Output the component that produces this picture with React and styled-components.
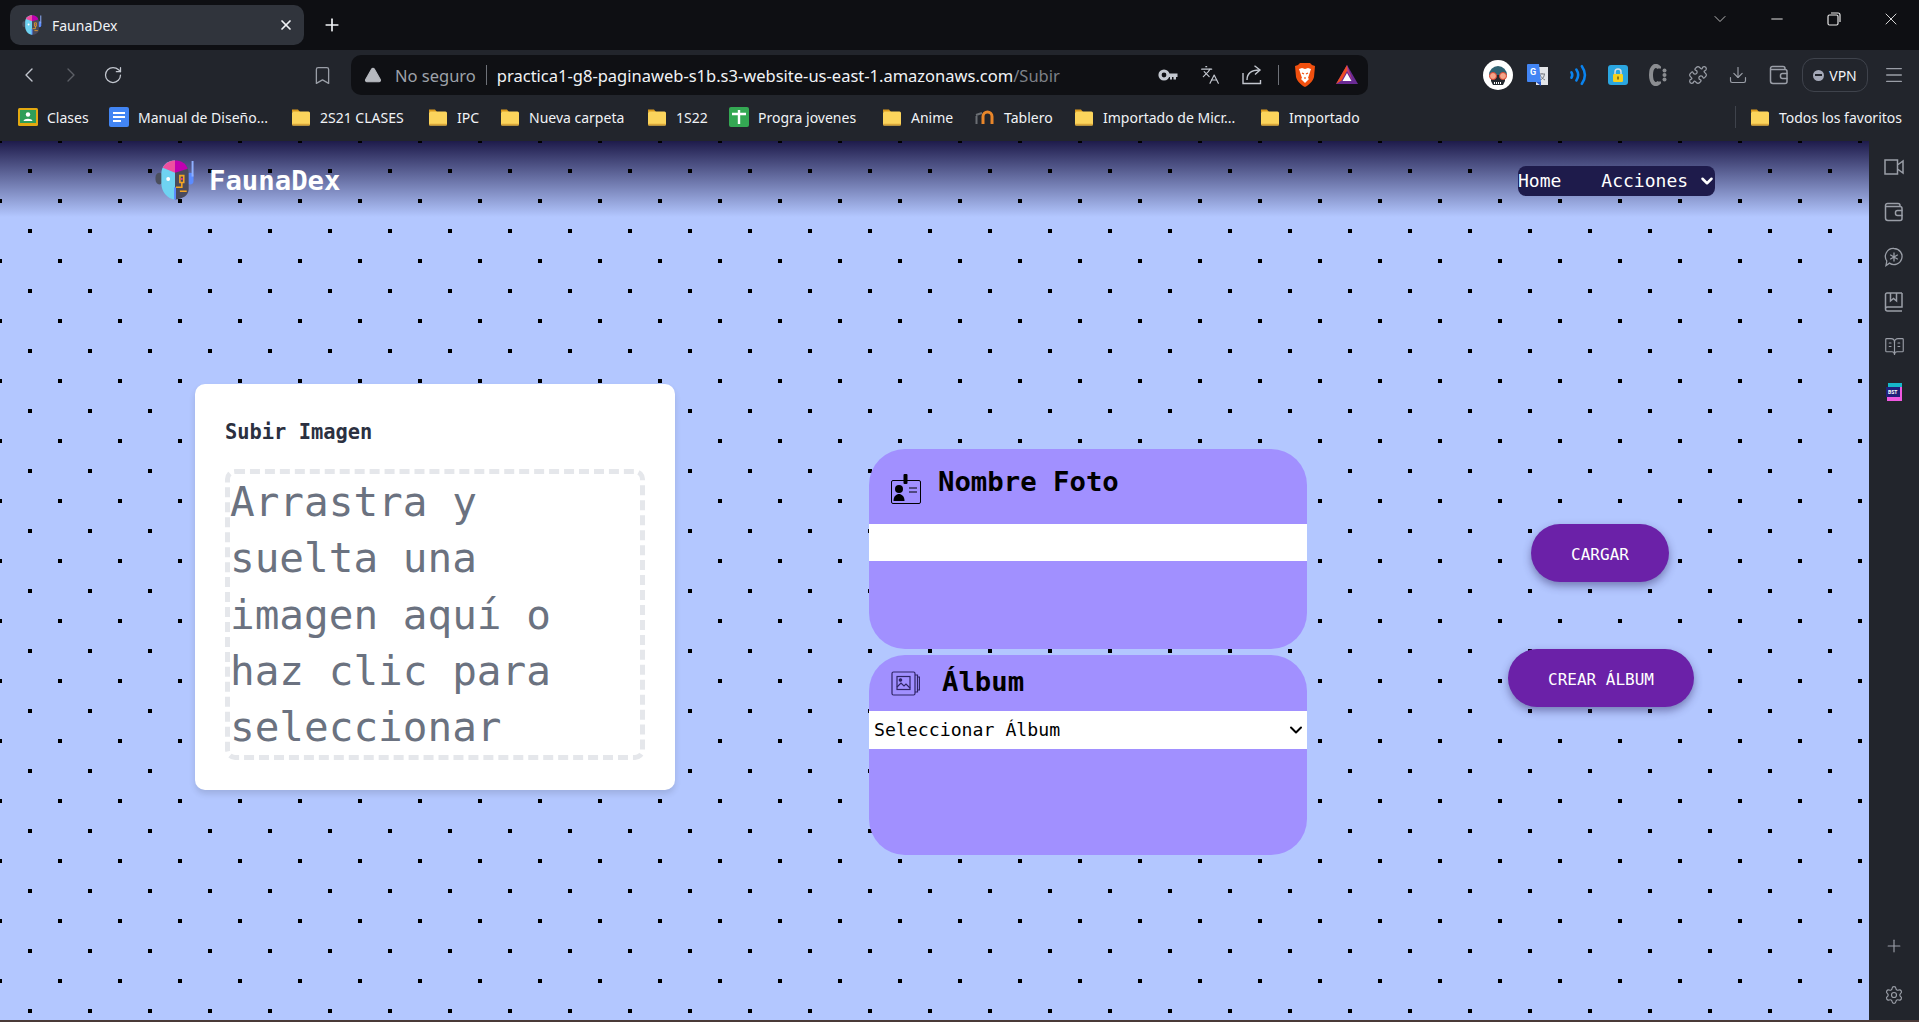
import React from 'react';
import styled, { createGlobalStyle } from 'styled-components';
import {
  ChevronLeft, ChevronRight, ChevronDown, RotateCw, Bookmark, Languages, Puzzle, Download,
  Menu, BookOpenText, Plus, Settings, X, Minus, TriangleAlert,
} from 'lucide-react';

const GlobalStyle = createGlobalStyle`
  html, body { margin: 0; height: 100%; overflow: hidden; background: #22252c; }
  #root { height: 100%; }
  * { box-sizing: border-box; }
`;

const UI_FONT = '"Noto Sans", "Open Sans", sans-serif';
const MONO = '"DejaVu Sans Mono", "Liberation Mono", monospace';

const Shell = styled.div`
  width: 1919px;
  height: 1022px;
  display: flex;
  flex-direction: column;
  font-family: ${UI_FONT};
  color: #f1f3f6;
`;

/* tab strip */
const TabStrip = styled.div`
  height: 50px;
  flex: none;
  background: #0e0f13;
  display: flex;
  align-items: center;
  padding-left: 10px;
`;
const Tab = styled.div`
  width: 294px;
  height: 40px;
  border-radius: 10px;
  background: #30343c;
  display: flex;
  align-items: center;
  padding: 0 10px 0 12px;
  font-size: 14px;
`;
const TabTitle = styled.span`
  margin-left: 10px;
  flex: 1;
`;
const NewTab = styled.div`
  display: flex;
  margin-left: 18px;
`;
const WindowControls = styled.div`
  margin-left: auto;
  display: flex;
  align-items: center;
  height: 100%;
  padding-bottom: 13px;
`;
const WindowButton = styled.div`
  width: 57px;
  display: flex;
  justify-content: center;
`;
const RestoreIcon = () => (
  <svg width="14" height="14" viewBox="0 0 14 14" fill="none" stroke="#e8e8e8" strokeWidth="1.2">
    <rect x="1" y="3" width="10" height="10" rx="1.5" />
    <path d="M4 1h7a2 2 0 0 1 2 2v7" />
  </svg>
);

/* toolbar */
const Toolbar = styled.div`
  height: 45px;
  flex: none;
  background: #22252c;
  display: flex;
  align-items: flex-end;
  padding-left: 8px;
`;
const ToolButton = styled.div`
  width: ${p => p.$w || 42}px;
  height: 40px;
  flex: none;
  margin-left: ${p => p.$ml || 0}px;
  display: flex;
  align-items: center;
  justify-content: center;
  color: ${p => p.$color || '#c3c7cf'};
`;
const Omnibox = styled.div`
  width: 1017px;
  height: 40px;
  flex: none;
  margin-left: 8px;
  border-radius: 10px;
  background: #0f1014;
  display: flex;
  align-items: center;
  padding-left: 13px;
  font-size: 16.5px;
`;
const NotSecure = styled.span`
  margin-left: 13px;
  color: #9ea2aa;
`;
const Divider = styled.span`
  width: 1px;
  height: ${p => p.$h || 20}px;
  background: ${p => p.$color || '#6e7178'};
  flex: none;
  margin: 0 ${p => p.$mx ?? 10}px;
`;
const Url = styled.span`
  color: #f1f3f6;
  white-space: nowrap;
`;
const UrlPath = styled.span`
  color: #7d8087;
`;
const OmniIcons = styled.div`
  margin-left: auto;
  display: flex;
  align-items: center;
`;
const OmniIcon = styled.div`
  width: 42px;
  display: flex;
  justify-content: center;
  color: #c3c7cf;
`;
const Extensions = styled.div`
  display: flex;
  margin-left: 110px;
`;
const VpnPill = styled.div`
  width: 66px;
  height: 34px;
  margin: 0 0 3px 2px;
  align-self: flex-end;
  border-radius: 12px;
  border: 1px solid #3f434c;
  display: flex;
  align-items: center;
  justify-content: center;
  gap: 5px;
  font-size: 14px;
`;
const VpnDot = styled.span`
  width: 11px;
  height: 11px;
  border-radius: 50%;
  background: #a5a9b8;
  display: flex;
  align-items: center;
  justify-content: center;
  &::after { content: ''; width: 7px; height: 2px; background: #22252c; }
`;

/* bookmarks */
const BookmarksBar = styled.div`
  height: 46px;
  flex: none;
  background: #22252c;
  display: flex;
  align-items: center;
  padding: 0 17px 2px 18px;
  font-size: 14px;
`;
const BookmarkItem = styled.div`
  display: flex;
  align-items: center;
  flex: none;
  gap: 9px;
  white-space: nowrap;
  width: ${p => (p.$w ? `${p.$w}px` : 'auto')};
  svg { flex: none; }
`;
const BookmarkEnd = styled.div`
  margin-left: auto;
  display: flex;
  align-items: center;
  gap: 14px;
`;

const FolderIcon = () => (
  <svg width="20" height="18" viewBox="0 0 20 18">
    <path d="M1 1.5h6l2 2.5H1z" fill="#d99a1e" />
    <rect x="1" y="3.5" width="18" height="14" rx="1.5" fill="#fbd45c" />
    <rect x="1" y="15.8" width="18" height="1.7" rx=".8" fill="#d9a63a" />
  </svg>
);
const ClassroomIcon = () => (
  <svg width="20" height="18" viewBox="0 0 20 18">
    <rect width="20" height="18" rx="1.5" fill="#e3a911" />
    <rect x="2" y="2" width="16" height="13" fill="#2f9e58" />
    <circle cx="10" cy="6.5" r="2.2" fill="#fff" />
    <path d="M5.5 13c.5-3 8.5-3 9 0z" fill="#fff" />
  </svg>
);
const DocsIcon = () => (
  <svg width="20" height="20" viewBox="0 0 20 20">
    <rect width="20" height="20" rx="2" fill="#4285f4" />
    <path d="M4 6h12M4 10h12M4 14h8" stroke="#fff" strokeWidth="2" />
  </svg>
);
const SheetIcon = () => (
  <svg width="20" height="20" viewBox="0 0 20 20">
    <rect width="20" height="20" rx="2" fill="#34a853" />
    <path d="M3 7h14M10 3v14" stroke="#fff" strokeWidth="2.4" />
  </svg>
);
const MoodleIcon = () => (
  <svg width="20" height="14" viewBox="0 0 20 14" fill="none" strokeWidth="3">
    <path d="M8 14V6.5a3 3 0 0 1 9 0V14" stroke="#e8862a" />
    <path d="M1.500 14V6M1 5l6-2" stroke="#6b6f74" strokeWidth="2" />
  </svg>
);

const RobotLogo = ({ size }) => (
  <svg width={size} height={size} viewBox="0 0 40 41">
    <rect x="0" y="13" width="8" height="12" rx="5" fill="#4b4f5e" />
    <rect x="32" y="13" width="7" height="12" rx="3.500" fill="#5b8cff" />
    <rect x="37" y="1" width="2" height="16" fill="#8fb0ff" />
    <path d="M20 .5C12 .5 6 6 6 14v10c0 8 6 16 14 16.500z" fill="#6fd3f2" />
    <path d="M20 .5c8 0 14 5.500 14 13.500v16c0 6-6 10-14 10.500z" fill="#4a4a5c" />
    <path d="M7.500 8C10 3 15 .5 20 .5V13z" fill="#ef4fa0" />
    <path d="M20 .5c6 0 11 2.500 13 8.500l-13 4z" fill="#c000b0" />
    <rect x="19" y="28" width="2" height="12.500" fill="#5b8cff" />
    <circle cx="13" cy="19.500" r="2" fill="#fff" />
    <path d="M25 16h4v7h-4zM27 23v5h-6M25 32h7" fill="none" stroke="#f5a623" strokeWidth="1.600" />
    <circle cx="27" cy="19.500" r="1" fill="#ef2fa0" />
  </svg>
);

const SkullIcon = () => (
  <svg width="30" height="30" viewBox="0 0 30 30">
    <circle cx="15" cy="15" r="15" fill="#fff" />
    <path d="M6 15a9 9 0 0 1 18 0z" fill="#2f6272" />
    <path d="M8 15h14v6l-2 4h-10l-2-4z" fill="#23282e" />
    <circle cx="10" cy="16" r="3.500" fill="#f4a58a" stroke="#d9432f" />
    <circle cx="20" cy="16" r="3.500" fill="#f4a58a" stroke="#d9432f" />
    <path d="M11 23h8" stroke="#fff" strokeWidth="2" strokeDasharray="1 1" />
  </svg>
);
const TranslateIcon = () => (
  <svg width="22" height="22" viewBox="0 0 22 22">
    <rect x="9" y="3" width="12" height="18" fill="#e3e5e8" />
    <path d="M12 10h6M15 9v1M13 16c3-1 4-3 4.500-6M13 11c1 2 3 4 5 5" stroke="#7a7d82" fill="none" />
    <path d="M1 0h11l2 18H1a1 1 0 0 1-1-1V1a1 1 0 0 1 1-1z" fill="#4285f4" />
    <text x="3" y="11" fontSize="9" fontWeight="700" fill="#fff" fontFamily="Roboto, sans-serif">G</text>
    <path d="M9 18l5 4v-4z" fill="#2a56c6" />
  </svg>
);
const WavesIcon = () => (
  <svg width="22" height="22" viewBox="0 0 20 20" fill="none" stroke="#0a84f0" strokeWidth="2.300" strokeLinecap="round">
    <path d="M4 7.500c1 1.500 1 3.500 0 5" />
    <path d="M8.500 5c2 3 2 7 0 10" />
    <path d="M13.500 2c3.500 5 3.500 11 0 16" />
  </svg>
);
const LockIcon = () => (
  <svg width="20" height="20" viewBox="0 0 20 20">
    <rect width="20" height="20" rx="3" fill="#2ba6e0" />
    <path d="M7 9V7a3 3 0 0 1 6 0v2" fill="none" stroke="#d7dde0" strokeWidth="1.500" />
    <rect x="5" y="9" width="10" height="8" rx="1.200" fill="#f5d020" />
    <rect x="9.200" y="11.500" width="1.600" height="3" fill="#7a6510" />
  </svg>
);
const CeIcon = () => (
  <svg width="20" height="22" viewBox="0 0 20 22" fill="none">
    <path d="M11 4.500V3.500C9.500 2 7.500 1.500 6 2.500 3.800 4 3 7 3 11s.8 7 3 8.500c1.500 1 3.500.5 5-1v-1" stroke="#8b8d91" strokeWidth="4" />
    <circle cx="16.500" cy="6.500" r="2" fill="#8b8d91" />
    <circle cx="16.500" cy="11" r="2" fill="#8b8d91" />
    <circle cx="16.500" cy="15.500" r="2" fill="#8b8d91" />
  </svg>
);
const WalletIcon = () => (
  <svg width="20" height="20" viewBox="0 0 20 20" fill="none" stroke="#9a9ea7" strokeWidth="1.500">
    <path d="M16 4.500V3.500a2 2 0 0 0-2-2H3.500a2 2 0 0 0-2 2V16a2.500 2.500 0 0 0 2.500 2.500h12a2 2 0 0 0 2-2V6.500a2 2 0 0 0-2-2H2" />
    <path d="M18.500 8.500h-5a2 2 0 0 0-2 2v1a2 2 0 0 0 2 2h5" />
  </svg>
);
const KeyIcon = () => (
  <svg width="20" height="12" viewBox="0 0 20 12">
    <circle cx="6" cy="6" r="4" fill="none" stroke="#c3c7cf" strokeWidth="3.200" />
    <path d="M9 4.500h10.500v3.500h-1.500v2.500h-2.500v-2.500h-1.500v2.500h-2V8H9z" fill="#c3c7cf" />
  </svg>
);
const ShareIcon = () => (
  <svg width="20" height="20" viewBox="0 0 20 20" fill="none" stroke="#c3c7cf" strokeWidth="1.400">
    <path d="M1 8v10.500h17.500V15" />
    <path d="M5 15c0-6 4-10 12.500-10" />
    <path d="M12.500 .8l5.500 4.200-5 4.500" />
  </svg>
);
const BraveIcon = () => (
  <svg width="20" height="24" viewBox="0 0 20 24">
    <path d="M5 0h10l2 2 3 1-1 11c-1 4-5 8-9 10-4-2-8-6-9-10L0 3l3-1z" fill="#f1500f" />
    <path d="M4 6l3-1 3 1 3-1 3 1-2 6-1 3 1 1-4 4-4-4 1-1-1-3z" fill="#fff" />
    <path d="M7 10l2 1M13 10l-2 1M10 14v2" stroke="#f1500f" strokeWidth="1.200" />
  </svg>
);
const BatIcon = () => (
  <svg width="22" height="20" viewBox="0 0 22 20">
    <path d="M11 0L0 19h22z" fill="#6a2a94" />
    <path d="M11 0L0 19l5.500-3.500L11 6z" fill="#f04e23" />
    <path d="M11 6l5.500 9.500L11 0z" fill="#c0407a" />
    <path d="M11 8l-4.500 8h9z" fill="#fff" />
  </svg>
);
const SideStarIcon = () => (
  <svg width="20" height="20" viewBox="0 0 20 20" fill="none" stroke="#9a9ea7" strokeWidth="1.300">
    <path d="M10 1.500a8 8 0 1 1-4.500 14.600L2 18.500l.8-4.500A8 8 0 0 1 10 1.500z" />
    <path d="M10 5.500v9M6.200 7.800l7.600 4.400M13.800 7.800l-7.600 4.400" />
  </svg>
);
const SideBookIcon = () => (
  <svg width="20" height="20" viewBox="0 0 20 20" fill="none" stroke="#9a9ea7" strokeWidth="1.500">
    <path d="M18 1H3a1.500 1.500 0 0 0-1.500 1.500V17A2 2 0 0 0 3.500 19H18M18 1v14H3.500a2 2 0 0 0-2 2" />
    <path d="M6.500 1v8l3-2.500 3 2.500V1" />
  </svg>
);
const SideVideoIcon = () => (
  <svg width="20" height="16" viewBox="0 0 20 16" fill="none" stroke="#9a9ea7" strokeWidth="1.500">
    <path d="M1 1h12.500v14H1zM13.500 6L19 2v12l-5.500-4" />
  </svg>
);
const PromoIcon = () => (
  <svg width="18" height="18" viewBox="0 0 18 18">
    <rect x="3" y="0" width="14" height="14" fill="#16b8c9" />
    <rect x="2" y="4" width="15" height="14" fill="#ef58e0" />
    <rect x="1" y="4" width="14" height="10" fill="#20207a" />
    <text x="3" y="11" fontSize="5" fontWeight="700" fill="#fff" fontFamily="Roboto, sans-serif">BST</text>
  </svg>
);

/* page */
const Body = styled.div`
  flex: 1;
  display: flex;
  min-height: 0;
`;
const Page = styled.main`
  flex: 1;
  background-color: #b3c7ff;
  background-image:
    radial-gradient(circle at center, #000 2.3px, transparent 2.4px),
    radial-gradient(circle at center, #000 2.3px, transparent 2.4px),
    linear-gradient(#1e1b4b, #b3c7ff);
  background-size: 60px 60px, 60px 60px, 100% 76px;
  background-position: 0 0, 30px 30px, 0 0;
  background-repeat: repeat, repeat, no-repeat;
`;
const Header = styled.header`
  height: 76px;
  display: flex;
  align-items: flex-start;
  padding-left: 155px;
  font-family: ${MONO};
`;
const Brand = styled.div`
  display: flex;
  align-items: center;
  gap: 14px;
  padding-top: 19px;
  color: #fff;
  font-weight: 700;
  font-size: 27.3px;
`;
const NavPill = styled.nav`
  margin: 25px 154px 0 auto;
  width: 197px;
  height: 30px;
  padding-bottom: 2px;
  border-radius: 8px;
  background: #1e1b4b;
  display: flex;
  align-items: center;
  font-size: 18px;
  font-weight: 500;
  color: #fff;
  white-space: nowrap;
`;
const NavLink = styled.span`
  margin-left: ${p => p.$ml || 0}px;
`;
const NavCaret = styled.span`
  display: flex;
  margin-left: 10px;
  padding-top: 2px;
`;
const Content = styled.div`
  display: flex;
  align-items: flex-start;
  padding-left: 195px;
  font-family: ${MONO};
`;
const UploadCard = styled.section`
  width: 480px;
  margin-top: 167px;
  padding: 30px;
  border-radius: 10px;
  background: #fff;
  box-shadow: 0 4px 6px rgba(0, 0, 0, 0.12);
`;
const CardLabel = styled.div`
  height: 36px;
  margin-bottom: 19px;
  line-height: 36px;
  font-size: 20.4px;
  font-weight: 700;
  color: #2b3040;
`;
const DropZone = styled.div`
  width: 420px;
  border: 5px dashed #e5e7eb;
  border-radius: 10px;
  font-size: 41px;
  line-height: 56.25px;
  color: #6b7280;
`;
const FormColumn = styled.div`
  width: 438px;
  margin: 232px 0 0 194px;
  display: flex;
  flex-direction: column;
  gap: 6px;
`;
const Panel = styled.section`
  height: 200px;
  border-radius: 36px;
  background: #a190ff;
`;
const PanelHead = styled.div`
  height: ${p => p.$h}px;
  display: flex;
  align-items: center;
  padding-left: 22px;
  gap: ${p => p.$gap}px;
  font-size: 27.3px;
  font-weight: 700;
  color: #000;
`;
const PanelTitle = styled.span`
  margin-top: ${p => p.$mt || 0}px;
`;
const PanelIcon = styled.svg`
  flex: none;
  margin-top: ${p => p.$mt || 0}px;
`;
const TextInput = styled.input`
  display: block;
  width: 100%;
  height: 37px;
  border: 0;
  padding: 0 5px;
  background: #fff;
  outline: none;
`;
const SelectField = styled.div`
  position: relative;
  height: 38px;
  color: #000;
`;
const AlbumSelect = styled.select`
  display: block;
  width: 100%;
  height: 100%;
  border: 0;
  border-radius: 0;
  padding: 0 24px 2px 5px;
  appearance: none;
  background-color: #fff;
  color: #000;
  font-family: ${MONO};
  font-size: 18.2px;
`;
const SelectCaret = styled.span`
  position: absolute;
  right: 1px;
  top: 9px;
  display: flex;
  pointer-events: none;
`;
const ActionColumn = styled.div`
  width: 186px;
  margin: 307px 0 0 201px;
  display: flex;
  flex-direction: column;
  align-items: center;
  gap: 67px;
`;
const ActionButton = styled.button`
  height: 58px;
  padding: 2px 40px 0;
  margin-right: ${p => p.$mr || 0}px;
  border: 0;
  border-radius: 29px;
  background: #6b21a8;
  color: #fff;
  font-family: ${MONO};
  font-size: 16px;
  box-shadow: 0 4px 8px rgba(40, 30, 90, 0.45);
`;

/* side panel */
const SidePanel = styled.aside`
  width: 50px;
  flex: none;
  background: #22252c;
  display: flex;
  flex-direction: column;
  align-items: center;
  color: #9a9ea7;
  padding: 3px 0 3px;
`;
const SideButton = styled.div`
  height: 45px;
  width: 100%;
  flex: none;
  display: flex;
  align-items: center;
  justify-content: center;
`;
const SideFooter = styled.div`
  margin-top: auto;
  width: 100%;
  display: flex;
  flex-direction: column;
  gap: 4px;
`;
const BottomLine = styled.div`
  height: 2px;
  flex: none;
  background: #4a3a38;
`;

// width of each bookmark, measured from the bar
const bookmarks = [
  ['Clases', 91, <ClassroomIcon key="i" />],
  ['Manual de Diseño...', 182, <DocsIcon key="i" />],
  ['2S21 CLASES', 137, <FolderIcon key="i" />],
  ['IPC', 72, <FolderIcon key="i" />],
  ['Nueva carpeta', 147, <FolderIcon key="i" />],
  ['1S22', 82, <FolderIcon key="i" />],
  ['Progra jovenes', 153, <SheetIcon key="i" />],
  ['Anime', 93, <FolderIcon key="i" />],
  ['Tablero', 99, <MoodleIcon key="i" />],
  ['Importado de Micr...', 186, <FolderIcon key="i" />],
  ['Importado', 100, <FolderIcon key="i" />],
];

export default function App() {
  return (
    <Shell>
      <GlobalStyle />
      <TabStrip>
        <Tab>
          <RobotLogo size={20} />
          <TabTitle>FaunaDex</TabTitle>
          <X size={16} strokeWidth={2.6} color="#f1f3f6" />
        </Tab>
        <NewTab><Plus size={20} color="#f1f3f6" /></NewTab>
        <WindowControls>
          <WindowButton><ChevronDown size={20} strokeWidth={1} color="#d8d8d8" /></WindowButton>
          <WindowButton><Minus size={18} strokeWidth={1.3} color="#e8e8e8" /></WindowButton>
          <WindowButton><RestoreIcon /></WindowButton>
          <WindowButton><X size={20} strokeWidth={1.1} color="#e8e8e8" /></WindowButton>
        </WindowControls>
      </TabStrip>

      <Toolbar>
        <ToolButton><ChevronLeft size={24} strokeWidth={1.4} /></ToolButton>
        <ToolButton $color="#5c5f66"><ChevronRight size={24} strokeWidth={1.4} /></ToolButton>
        <ToolButton><RotateCw size={20} strokeWidth={1.5} /></ToolButton>
        <ToolButton $ml={167} $color="#9a9ea7"><Bookmark size={21} strokeWidth={1.5} /></ToolButton>
        <Omnibox>
          <TriangleAlert size={18} fill="#b6b9bf" color="#b6b9bf" strokeWidth={1.5} />
          <NotSecure>No seguro</NotSecure>
          <Divider />
          <Url>practica1-g8-paginaweb-s1b.s3-website-us-east-1.amazonaws.com<UrlPath>/Subir</UrlPath></Url>
          <OmniIcons>
            <OmniIcon><KeyIcon /></OmniIcon>
            <OmniIcon><Languages size={20} strokeWidth={1.4} /></OmniIcon>
            <OmniIcon><ShareIcon /></OmniIcon>
            <Divider $h={20} $mx={5} />
            <OmniIcon><BraveIcon /></OmniIcon>
            <OmniIcon><BatIcon /></OmniIcon>
          </OmniIcons>
        </Omnibox>
        <Extensions>
          <ToolButton $w={40}><SkullIcon /></ToolButton>
          <ToolButton $w={40}><TranslateIcon /></ToolButton>
          <ToolButton $w={40}><WavesIcon /></ToolButton>
          <ToolButton $w={40}><LockIcon /></ToolButton>
          <ToolButton $w={40}><CeIcon /></ToolButton>
          <ToolButton $w={40} $color="#9a9ea7"><Puzzle size={20} strokeWidth={1.5} /></ToolButton>
          <ToolButton $w={40} $color="#9a9ea7"><Download size={20} strokeWidth={1.4} /></ToolButton>
          <ToolButton $w={42}><WalletIcon /></ToolButton>
        </Extensions>
        <VpnPill><VpnDot />VPN</VpnPill>
        <ToolButton $w={46} $ml={3} $color="#9a9ea7"><Menu size={22} strokeWidth={1.4} /></ToolButton>
      </Toolbar>

      <BookmarksBar>
        {bookmarks.map(([label, width, icon]) => (
          <BookmarkItem key={label} $w={width}>{icon}{label}</BookmarkItem>
        ))}
        <BookmarkEnd>
          <Divider $h={22} $mx={0} $color="#3f434c" />
          <BookmarkItem><FolderIcon />Todos los favoritos</BookmarkItem>
        </BookmarkEnd>
      </BookmarksBar>

      <Body>
        <Page>
          <Header>
            <Brand><RobotLogo size={40} />FaunaDex</Brand>
            <NavPill>
              <NavLink>Home</NavLink>
              <NavLink $ml={40}>Acciones</NavLink>
              <NavCaret><ChevronDown size={18} strokeWidth={3.4} /></NavCaret>
            </NavPill>
          </Header>
          <Content>
            <UploadCard>
              <CardLabel>Subir Imagen</CardLabel>
              <DropZone>Arrastra y suelta una imagen aquí o haz clic para seleccionar</DropZone>
            </UploadCard>
            <FormColumn>
              <Panel>
                <PanelHead $h={75} $gap={17}>
                  <PanelIcon $mt={4} width="30" height="30" viewBox="0 0 30 30" fill="none" stroke="#000">
                    <rect x=".5" y="6.500" width="29" height="23" rx="1.500" />
                    <rect x="12.500" y="0" width="4" height="10" rx="1" fill="#000" stroke="none" />
                    <circle cx="8" cy="15" r="4" fill="#000" stroke="none" />
                    <path d="M2.500 27c0-5 3-7 5.500-7s5.500 2 5.500 7z" fill="#000" stroke="none" />
                    <path d="M18 14h8M18 18h8" strokeWidth="1.200" />
                  </PanelIcon>
                  <PanelTitle $mt={-10}>Nombre Foto</PanelTitle>
                </PanelHead>
                <TextInput type="text" />
              </Panel>
              <Panel>
                <PanelHead $h={56} $gap={22}>
                  <PanelIcon width="29" height="25" viewBox="0 0 29 25" fill="none" stroke="#2f2566" strokeWidth="1.200">
                    <rect x="1" y="1" width="23" height="23" rx="1.500" />
                    <rect x="6" y="5.500" width="13" height="13" />
                    <path d="M6 16l4-4 3 3 2-2 4 4" />
                    <circle cx="9.500" cy="9" r="1.200" fill="#2f2566" />
                    <path d="M24 4h2.500v17H24M26.500 6h2v13h-2" />
                  </PanelIcon>
                  <PanelTitle $mt={-3}>Álbum</PanelTitle>
                </PanelHead>
                <SelectField>
                  <AlbumSelect defaultValue="">
                    <option value="">Seleccionar Álbum</option>
                  </AlbumSelect>
                  <SelectCaret><ChevronDown size={20} strokeWidth={2.4} /></SelectCaret>
                </SelectField>
              </Panel>
            </FormColumn>
            <ActionColumn>
              <ActionButton $mr={2}>CARGAR</ActionButton>
              <ActionButton>CREAR ÁLBUM</ActionButton>
            </ActionColumn>
          </Content>
        </Page>
        <SidePanel>
          <SideButton><SideVideoIcon /></SideButton>
          <SideButton><WalletIcon /></SideButton>
          <SideButton><SideStarIcon /></SideButton>
          <SideButton><SideBookIcon /></SideButton>
          <SideButton><BookOpenText size={21} strokeWidth={1.3} /></SideButton>
          <SideButton><PromoIcon /></SideButton>
          <SideFooter>
            <SideButton><Plus size={20} strokeWidth={1.4} /></SideButton>
            <SideButton><Settings size={20} strokeWidth={1.4} /></SideButton>
          </SideFooter>
        </SidePanel>
      </Body>
      <BottomLine />
    </Shell>
  );
}
